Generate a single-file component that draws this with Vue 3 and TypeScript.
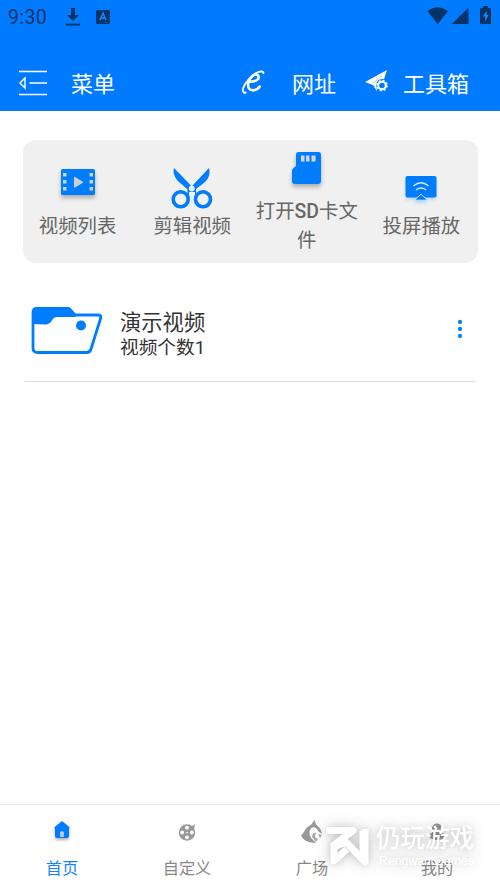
<script setup lang="ts">
interface Tool {
  id: string
  label: string
  latin?: string
  rest?: string
}
interface Tab {
  id: string
  label: string
}

const tools: Tool[] = [
  { id: 'list', label: '视频列表' },
  { id: 'cut', label: '剪辑视频' },
  { id: 'sd', label: '打开', latin: 'SD', rest: '卡文件' },
  { id: 'cast', label: '投屏播放' },
]
const tabs: Tab[] = [
  { id: 'home', label: '首页' },
  { id: 'custom', label: '自定义' },
  { id: 'square', label: '广场' },
  { id: 'mine', label: '我的' },
]
const active = 'home'
</script>

<template>
  <div class="screen">
    <header class="header">
      <div class="status">
        <span class="time">9:30</span>
        <svg class="download" width="16" height="20" viewBox="0 0 16 20">
          <path d="M6 1h4v7h4l-6 6-6-6h4z" fill="#033468" />
          <path d="M1 17.6h14" stroke="#033468" stroke-width="2" />
        </svg>
        <svg class="keyboard" width="14" height="14" viewBox="0 0 14 14">
          <rect width="14" height="14" rx="1.6" fill="#033468" />
          <path d="M4 10.3 7 3.2l3 7.1M5 8.1h4" fill="none" stroke="#1b82ee" stroke-width="1.6" />
          <path d="M7.5 12.4h5" stroke="#0b65c4" stroke-width=".7" />
        </svg>
        <svg class="signals" width="64" height="20" viewBox="0 0 64 20">
          <path d="M.5 5.2Q10.500-2.800 21 5.200L10.700 18z" fill="#033468" />
          <path d="M41.500 1.500V18H24.800z" fill="#033468" />
          <path d="M56 0h5v2h2.300q.7 0 .7.800V17q0 1-1 1h-9q-1 0-1-1V2.800q0-.8.800-.8H56z" fill="#033468" />
          <path d="m59.600 4.500-3.600 6h2.200v5l3.400-6.500h-2z" fill="#2688f2" />
        </svg>
      </div>
      <nav class="bar">
        <svg width="30" height="28" viewBox="0 0 30 28" fill="none" stroke="#fff">
          <path d="M1 2.500h28M11.500 14H29M1 25.500h28" stroke-width="1.700" />
          <path d="M7 9v10l-5-5z" stroke-width="1.400" />
        </svg>
        <span class="bar-menu">菜单</span>
        <svg class="ie" width="24" height="26" viewBox="0 0 24 26" fill="none" stroke="#fff" stroke-linecap="round">
          <path d="M9.500 12.800C16 12.300 19 9.500 17.200 6.700C15 3.500 9 7 7.500 13.500C6.200 19 8.800 21.300 11.700 21.300C15 21.300 17 20 18.700 17.500" stroke-width="2.500" />
          <path d="M22.500 4C22 1.300 17 2.200 12.200 6.200C5 12 0 20 2.500 23.200Q3.200 24.100 4.700 23.500" stroke-width="1.900" />
        </svg>
        <span class="bar-url">网址</span>
        <svg class="plane" width="23" height="23" viewBox="0 0 23 23">
          <path d="M22 0 19 9.300C14.500 8.300 11 11.500 11.300 15.500L12 21.500 8.300 15.200 0 12z" fill="#fff" />
          <path d="M17 5.500 7.500 13.800" stroke="#66b0ff" stroke-width=".6" />
          <circle cx="17" cy="15.500" r="3.800" fill="#007bff" stroke="#fff" stroke-width="2" />
          <circle cx="17" cy="15.500" r="5" fill="none" stroke="#fff" stroke-width="1.500" stroke-dasharray="2 1.930" />
        </svg>
        <span class="bar-tools">工具箱</span>
      </nav>
    </header>

    <main class="content">
      <section class="card">
        <div v-for="tool in tools" :key="tool.id" class="tool">
          <svg v-if="tool.id === 'list'" class="shadow list" width="34" height="26" viewBox="0 0 34 26">
            <rect width="34" height="26" rx="1.500" fill="#007dff" />
            <path d="M2 4h3.500v3.500H2zm0 7h3.500v3.500H2zm0 7h3.500v3.500H2zM28.500 4H32v3.500h-3.500zm0 7H32v3.500h-3.500zm0 7H32v3.500h-3.500z" fill="#c8d4df" />
            <path d="M13 8.500q0-1 1-.5l7.500 4.600q1 .7 0 1.400L14 18.600q-1 .5-1-.5z" fill="#cbcfd3" />
          </svg>
          <svg v-else-if="tool.id === 'cut'" class="cut" width="42" height="42" viewBox="0 0 42 42">
            <path d="M3 1C1 8 6 14 11 17.500L16.500 22.500 20 18.500z" fill="#007dff" />
            <path d="M38 1C40 9 36 14 31 17.500L25 22v5h4v3h-5v-5h-6v5h-5v-3h3.500v-5L22 18z" fill="#007dff" />
            <circle cx="20.800" cy="21.500" r="2.900" fill="#f0f0f0" />
            <circle cx="9.700" cy="32.300" r="7.500" fill="#f0f0f0" stroke="#007dff" stroke-width="3.600" />
            <circle cx="32" cy="32.300" r="7.500" fill="#f0f0f0" stroke="#007dff" stroke-width="3.600" />
          </svg>
          <svg v-else-if="tool.id === 'sd'" class="shadow sd" width="29" height="32" viewBox="0 0 29 32">
            <path d="M6.500 0h20q2.500 0 2.500 3v26q0 3-3 3H3q-3 0-3-3V18.500q0-1 1-2l3-2.500V3q0-3 2.500-3z" fill="#007dff" />
            <path d="M9 3.500h3.500v6H9zm5 0h3.500v6H14zm5.500 0h4v6h-4z" fill="#d4d7da" />
          </svg>
          <svg v-else class="cast" width="32" height="25" viewBox="0 0 32 25">
            <rect x=".5" width="31" height="21.500" rx="2" fill="#007dff" />
            <path d="M9 9.500q7-5.500 14 0M11.500 13.500q4.500-3 9 0" fill="none" stroke="#d9e8fa" stroke-width="1.500" stroke-linecap="round" />
            <path d="m9.500 24.200 6.500-6 6.500 6z" fill="#007dff" stroke="#e6eef8" stroke-width=".8" />
          </svg>
          <span class="tool-label">{{ tool.label }}<span v-if="tool.latin" class="latin">{{ tool.latin }}</span>{{ tool.rest }}</span>
        </div>
      </section>

      <section class="folder">
        <svg class="folder-icon" width="72" height="48" viewBox="0 0 72 48">
          <path d="M2 15V5q0-3.500 3.500-3.500H38L44 8h23q3.500 0 2.700 3L60 42q-1 3.500-4.500 3.500H6.500Q2 45.500 2 41z" fill="#fff" stroke="#007dff" stroke-width="2.800" stroke-linejoin="round" />
          <path d="M2 17V4q0-3 3-3h33l7 9H26c-6 0-4 7.500-12 7.500z" fill="#007dff" />
          <circle cx="50" cy="18.500" r="5" fill="#007dff" />
        </svg>
        <div class="folder-text">
          <span class="folder-title">演示视频</span>
          <span class="folder-count">视频个数1</span>
        </div>
        <svg class="more" width="6" height="20" viewBox="0 0 6 20" fill="#0a80ff">
          <circle cx="3" cy="3" r="2.150" />
          <circle cx="3" cy="10" r="2.150" />
          <circle cx="3" cy="17" r="2.150" />
        </svg>
      </section>
    </main>

    <footer class="tabs">
      <div v-for="tab in tabs" :key="tab.id" class="tab" :class="{ active: tab.id === active }">
        <span class="tab-icon">
          <svg v-if="tab.id === 'home'" class="home" width="16" height="18" viewBox="0 0 16 18">
            <path d="M7 .7Q8 0 9 .7l6.500 5.500q.5 1-.5 1.300V15q0 2-2 2H3q-2 0-2-2V7.500Q0 7.200.5 6.200z" fill="#007dff" />
            <path d="M6.200 16v-4.500q0-1.200 1.800-1.200t1.800 1.200V16z" fill="#c9d0d7" />
          </svg>
          <svg v-else-if="tab.id === 'custom'" class="reel" width="18" height="18" viewBox="0 0 18 18">
            <circle cx="9" cy="9.500" r="8.200" fill="#999" />
            <path d="m13 4 4-3-1 6z" fill="#999" />
            <g fill="#fff">
              <circle cx="9" cy="4.700" r="1.900" />
              <circle cx="9" cy="14.300" r="1.900" />
              <circle cx="4.200" cy="9.500" r="1.900" />
              <circle cx="13.800" cy="9.500" r="1.900" />
              <circle cx="9" cy="9.500" r=".8" />
            </g>
          </svg>
          <svg v-else-if="tab.id === 'square'" class="flame" width="22" height="24" viewBox="0 0 22 24">
            <path d="M14 0c-.5 5 4 6 6 10l1 4-3-2-3-4c-3-2-6 0-6.500 4-.5 5 3 7 6.500 11C8 23 1 20 0 15 3 14 3 9 8 6c4-2 3-4 6-6z" fill="#999" />
            <path d="M11 17c0-3 2-5 4-4l-1 4 3 2-2 3zM17 14l4 1-2 3z" fill="#aaa" />
          </svg>
          <svg v-else class="person" width="18" height="18" viewBox="0 0 18 18" fill="#999">
            <circle cx="9" cy="5.500" r="5" />
            <path d="M4 7h10v3c3 0 3 3 2 5l-5 2H7l-5-2c-1-2-1-5 2-5z" />
            <path d="M6 13h6" stroke="#fff" stroke-width="1.500" />
          </svg>
        </span>
        <span class="tab-label">{{ tab.label }}</span>
      </div>
      <div class="watermark">
        <svg width="46" height="42" viewBox="0 0 46 42" fill="none" stroke="#fff" stroke-width="7" stroke-linejoin="round">
          <path d="M1 5.500h27L9 20v16l13-12" />
          <path d="m9 22 12-5 19 20V4" />
          <path d="M38 6v30" />
        </svg>
        <div class="mark-text">
          <span class="mark-cn">仍玩游戏</span>
          <span class="mark-en">Rengwan Games</span>
        </div>
      </div>
    </footer>
  </div>
</template>

<style>
body {
  background: #fff;
}
</style>

<style scoped>
.screen {
  display: flex;
  flex-direction: column;
  width: 500px;
  height: 888px;
  overflow: hidden;
  background: #fff;
  font-family: Roboto, "Noto Sans CJK SC", sans-serif;
}
svg {
  display: block;
  flex: none;
}
.header {
  height: 111px;
  background: #007bff;
}
.status {
  display: flex;
  align-items: center;
  height: 34px;
  padding: 0 9px 0 8px;
}
.time {
  width: 40px;
  color: #033468;
  font-size: 19.500px;
  letter-spacing: .4px;
  white-space: nowrap;
}
.download {
  margin-left: 17px;
}
.keyboard {
  margin-left: 15px;
}
.signals {
  margin: -2px 0 0 auto;
}
.bar {
  display: flex;
  align-items: center;
  padding: 21px 0 0 18px;
  box-sizing: border-box;
  height: 77px;
  color: #fff;
  font-size: 22px;
  line-height: 30px;
  white-space: nowrap;
}
.bar-menu {
  width: 44px;
  margin: 3px 0 0 23px;
}
.ie {
  margin: -2px 0 0 126px;
}
.bar-url {
  width: 44px;
  margin: 3px 0 0 27px;
}
.plane {
  margin: -3px 0 0 29px;
}
.bar-tools {
  margin: 3px 0 0 15px;
}
.content {
  flex: 1;
  padding: 29px 22px 0;
}
.card {
  display: grid;
  grid-template-columns: repeat(4, 114.600px);
  justify-content: center;
  align-items: start;
  height: 122.500px;
  margin-left: .5px;
  border-radius: 13px;
  background: #f0f0f0;
}
.tool {
  display: flex;
  flex-direction: column;
  align-items: center;
  padding: 0 6.500px 0 5px;
}
.shadow {
  filter: drop-shadow(0 3px 2px rgba(0, 0, 0, .28));
}
.list {
  margin: 29px 0 17px;
}
.cut {
  margin: 27px 0 3px;
}
.sd {
  margin: 12px 0 13px;
}
.cast {
  margin: 36px 0 11px;
  filter: drop-shadow(0 2px 1.500px rgba(0, 125, 255, .25));
}
.tool-label {
  color: #666;
  font-size: 19.400px;
  line-height: 29px;
  text-align: center;
}
.latin {
  font-weight: 500;
}
.folder {
  display: flex;
  align-items: center;
  height: 119.500px;
  margin: 0 3px;
  padding: 14px 12px 0 6px;
  box-sizing: border-box;
  border-bottom: 1px solid #dcdcdc;
  color: #333;
}
.folder-icon {
  margin-top: 4px;
}
.folder-text {
  display: flex;
  flex-direction: column;
  margin: 13px 0 0 17px;
}
.folder-title {
  font-size: 21.300px;
  line-height: 27px;
}
.folder-count {
  font-size: 18.700px;
  line-height: 25px;
}
.more {
  margin: 1px 0 0 auto;
}
.tabs {
  position: relative;
  display: grid;
  grid-template-columns: repeat(4, 1fr);
  height: 84px;
  box-sizing: border-box;
  border-top: 1px solid #ebebeb;
}
.tab {
  display: flex;
  flex-direction: column;
  align-items: center;
  padding-right: 1px;
  color: #888;
}
.tab-icon {
  display: flex;
  align-items: center;
  height: 53px;
}
.home {
  margin-top: -3px;
  filter: drop-shadow(0 2px 1.500px rgba(0, 0, 0, .3));
}
.reel {
  margin-top: 1px;
}
.tab-label {
  font-size: 16.200px;
  line-height: 22px;
}
.active {
  color: #1684ff;
}
.watermark {
  position: absolute;
  left: 325px;
  top: 20px;
  display: flex;
  color: #fff;
  filter: drop-shadow(0 0 3px rgba(0, 0, 0, .1)) drop-shadow(0 0 7px rgba(0, 0, 0, .22));
}
.mark-text {
  display: flex;
  flex-direction: column;
  margin: 1px 0 0 5px;
  white-space: nowrap;
}
.mark-cn {
  font-size: 24.500px;
  font-weight: 500;
  line-height: 26px;
}
.mark-en {
  margin-left: 3px;
  font-family: "Liberation Sans", sans-serif;
  font-size: 12.300px;
  line-height: 18px;
}
</style>
